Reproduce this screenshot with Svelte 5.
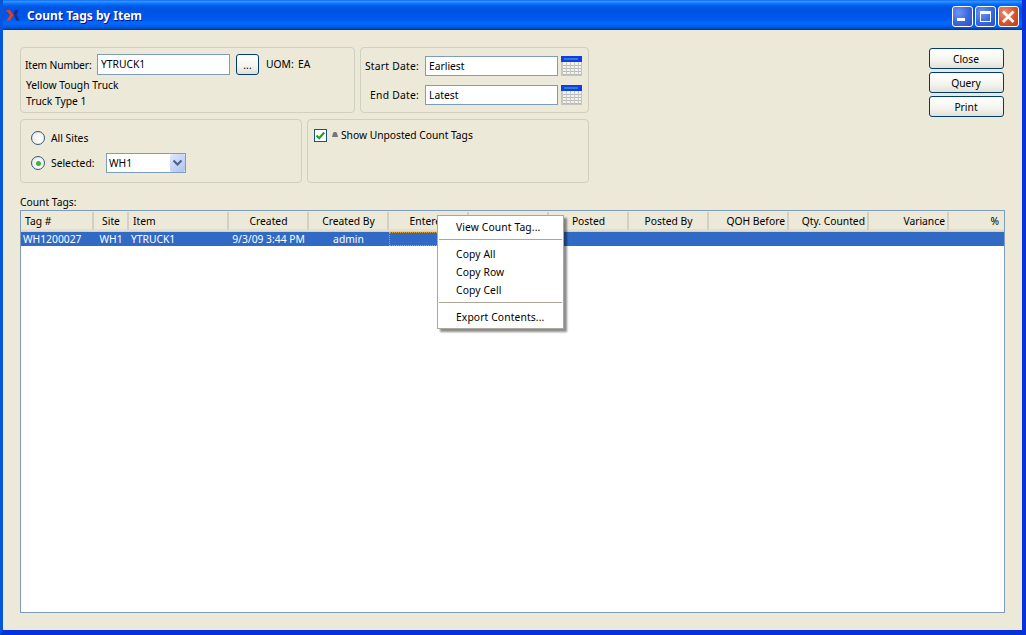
<script>
  const cols = [
    { label: 'Tag #', w: 73, a: 'left', v: 'WH1200027' },
    { label: 'Site', w: 35, a: 'center', v: 'WH1' },
    { label: 'Item', w: 100, a: 'left', v: 'YTRUCK1' },
    { label: 'Created', w: 80, a: 'center', v: '9/3/09 3:44 PM' },
    { label: 'Created By', w: 80, a: 'center', v: 'admin' },
    { label: 'Entered', w: 80, a: 'center', v: '', focus: true },
    { label: 'Entered By', w: 80, a: 'center', v: '' },
    { label: 'Posted', w: 80, a: 'center', v: '' },
    { label: 'Posted By', w: 80, a: 'center', v: '' },
    { label: 'QOH Before', w: 80, a: 'right', v: '' },
    { label: 'Qty. Counted', w: 80, a: 'right', v: '' },
    { label: 'Variance', w: 80, a: 'right', v: '' },
    { label: '%', w: 55, a: 'right', v: '' }
  ];
  const template = cols.map((c) => c.w + 'px').join(' ');
  const calCols = [1, 5, 9, 13, 17];
  const calRows = [9, 12, 15, 18];
</script>

{#snippet calendar()}
  <svg class="cal" width="21" height="20" viewBox="0 0 21 20">
    <rect x="0.5" y="0.5" width="20" height="19" fill="#f2f2f0" stroke="#c4c4c0" />
    <rect x="0" y="0" width="21" height="6" fill="#0f3de8" />
    <rect x="3" y="2" width="14" height="2" fill="#2f7fc4" />
    {#each calRows as y}
      <rect x="1" {y} width="19" height="1" fill="#b8b8b4" />
    {/each}
    {#each calCols as x}
      <rect {x} y="6" width="1" height="13" fill="#c8c8c4" />
    {/each}
  </svg>
{/snippet}

<div class="window">
  <header class="titlebar">
    <svg class="logo" width="14" height="11" viewBox="0 0 14 11">
      <path d="M0 0 H4 L7.500 5 L4 10.500 H0.500 L4 5 Z" fill="#e0431c" />
      <path d="M12.500 0 H9 L7.500 3 L10 10.500 H14 L10.500 5 Z" fill="#1c2f86" />
    </svg>
    <span class="title">Count Tags by Item</span>
    <div class="wbtns">
      <div class="wbtn blue">
        <svg width="21" height="21" viewBox="0 0 21 21"><rect x="5" y="12" width="8" height="3" fill="#fff" /></svg>
      </div>
      <div class="wbtn blue">
        <svg width="21" height="21" viewBox="0 0 21 21"><rect x="5.500" y="5.500" width="10" height="10" fill="none" stroke="#fff" /><rect x="5" y="5" width="11" height="3" fill="#fff" /></svg>
      </div>
      <div class="wbtn red">
        <svg width="21" height="21" viewBox="0 0 21 21"><path d="M5 5.500 L15.500 16 M15.500 5.500 L5 16" stroke="#fff" stroke-width="2.800" /></svg>
      </div>
    </div>
  </header>

  <main class="content">
    <div class="top">
      <div class="params">
        <div class="row one">
          <section class="group item">
            <div class="line">
              <span class="lbl-item">Item Number:</span>
              <div class="input item-input">YTRUCK1</div>
              <div class="btn dots">...</div>
              <span class="uom">UOM:</span>
              <span class="ea">EA</span>
            </div>
            <div class="desc first">Yellow Tough Truck</div>
            <div class="desc">Truck Type 1</div>
          </section>
          <section class="group dates">
            <div class="date-row">
              <span class="date-lbl">Start Date:</span>
              <div class="input date-input">Earliest</div>
              {@render calendar()}
            </div>
            <div class="date-row">
              <span class="date-lbl">End Date:</span>
              <div class="input date-input">Latest</div>
              {@render calendar()}
            </div>
          </section>
        </div>
        <div class="row two">
          <section class="group sites">
            <div class="site-row">
              <span class="radio"></span>
              <span class="radio-lbl">All Sites</span>
            </div>
            <div class="site-row second">
              <span class="radio"><span class="dot"></span></span>
              <span class="radio-lbl sel">Selected:</span>
              <div class="combo">
                <span class="combo-val">WH1</span>
                <span class="arrow">
                  <svg width="15" height="17" viewBox="0 0 15 17"><path d="M3.500 6.500 L7.500 10.500 L11.500 6.500" fill="none" stroke="#4d6185" stroke-width="2" /></svg>
                </span>
              </div>
            </div>
          </section>
          <section class="group posted">
            <span class="check">
              <svg width="13" height="13" viewBox="0 0 13 13"><path d="M2.500 6.500 L5.200 9.200 L10.200 3.500" fill="none" stroke="#21a121" stroke-width="2.200" /></svg>
            </span>
            <svg class="caret" width="6" height="5" viewBox="0 0 6 5"><path d="M0 5 L1 1 L2 0 L4 0 L5 1 L6 5 Z" fill="#777" /></svg>
            <span class="posted-lbl">Show Unposted Count Tags</span>
          </section>
        </div>
      </div>
      <div class="actions">
        <div class="btn action">Close</div>
        <div class="btn action">Query</div>
        <div class="btn action">Print</div>
      </div>
    </div>

    <div class="list-label">Count Tags:</div>
    <div class="table">
      <div class="thead" style="grid-template-columns: {template}">
        {#each cols as c}
          <div class="th {c.a}">{c.label}</div>
        {/each}
      </div>
      <div class="trow" style="grid-template-columns: {template}">
        {#each cols as c}
          <div class="td {c.a}" class:focus={c.focus}>{c.v}</div>
        {/each}
      </div>

      <div class="menu">
        <div class="mi">View Count Tag...</div>
        <div class="sep"></div>
        <div class="mi">Copy All</div>
        <div class="mi">Copy Row</div>
        <div class="mi">Copy Cell</div>
        <div class="sep"></div>
        <div class="mi">Export Contents...</div>
      </div>
    </div>
  </main>
</div>

<style>
  :global(body) {
    margin: 0;
    background: #ece9d8;
  }
  .window {
    width: 1026px;
    height: 635px;
    box-sizing: border-box;
    display: flex;
    flex-direction: column;
    overflow: hidden;
    font-family: "Noto Sans", "DejaVu Sans", sans-serif;
    font-size: 10.3px;
    line-height: 14px;
    color: #000;
    background: #ece9d8;
    border-left: 3px solid #0855dd;
    border-right: 4px solid #0831d9;
    border-bottom: 5px solid #0831d9;
  }
  .titlebar {
    flex: none;
    height: 30px;
    margin: 0 -4px 0 -3px;
    display: flex;
    align-items: center;
    background: linear-gradient(180deg, #0058ee 0, #3593ff 3%, #288eff 7%, #127dff 10%, #036ffc 14%, #0262ee 18%, #0057e5 22%, #0054e3 26%, #0055eb 56%, #005bf5 66%, #026afe 76%, #0062ef 86%, #0052d6 93%, #0040ab 97%, #003092 100%);
  }
  .logo {
    margin-left: 6px;
    margin-top: 1px;
    flex: none;
  }
  .title {
    margin-left: 7px;
    font-family: "Noto Sans", sans-serif;
    font-weight: 700;
    font-size: 12px;
    color: #fff;
    text-shadow: 1px 1px 0 #0f1089;
    margin-top: 2px;
  }
  .wbtns {
    margin-left: auto;
    margin-right: 7px;
    margin-top: 3px;
    display: flex;
    gap: 2px;
  }
  .wbtn {
    width: 21px;
    height: 21px;
    box-sizing: border-box;
    border: 1px solid #fff;
    border-radius: 3px;
    overflow: hidden;
  }
  .wbtn svg {
    display: block;
    margin: -1px;
  }
  .blue {
    background: radial-gradient(circle at 30% 30%, #6f94f0 0, #3a66de 55%, #2a4fc4 100%);
  }
  .red {
    background: radial-gradient(circle at 30% 30%, #e8906c 0, #d9512d 55%, #c03a15 100%);
  }
  .content {
    flex: 1;
    min-height: 0;
    display: flex;
    flex-direction: column;
    padding: 17px;
  }
  .top {
    display: flex;
    justify-content: space-between;
    flex: none;
  }
  .params {
    width: 569px;
    display: flex;
    flex-direction: column;
    gap: 6px;
  }
  .row {
    display: flex;
    gap: 5px;
  }
  .row.one {
    height: 66px;
  }
  .row.two {
    height: 64px;
  }
  .group {
    box-sizing: border-box;
    border: 1px solid #d0d0bf;
    border-radius: 4px;
  }
  .item {
    width: 335px;
    padding: 6px 0 0 4px;
  }
  .line {
    display: flex;
    align-items: center;
    height: 21px;
  }
  .lbl-item {
    width: 72px;
    flex: none;
    letter-spacing: -0.15px;
  }
  .input {
    box-sizing: border-box;
    background: #fff;
    border: 1px solid #7f9db9;
    display: flex;
    align-items: center;
    padding-left: 3px;
    flex: none;
  }
  .item-input {
    width: 133px;
    height: 21px;
    padding-bottom: 2px;
  }
  .btn {
    box-sizing: border-box;
    border: 1px solid #003c74;
    border-radius: 3px;
    background: linear-gradient(180deg, #fff 0, #f4f4ee 60%, #e3e1d5 100%);
    display: flex;
    align-items: center;
    justify-content: center;
    flex: none;
  }
  .dots {
    width: 23px;
    height: 21px;
    margin-left: 6px;
  }
  .uom {
    margin-left: 7px;
    width: 32px;
    margin-top: -2px;
  }
  .ea {
    margin-top: -2px;
  }
  .desc {
    height: 16px;
    line-height: 16px;
    margin-left: 1px;
  }
  .desc.first {
    margin-top: 2px;
  }
  .dates {
    width: 229px;
    padding: 8px 0 0 0;
    display: flex;
    flex-direction: column;
    gap: 9px;
  }
  .date-row {
    display: flex;
    align-items: center;
    height: 20px;
  }
  .date-lbl {
    width: 58px;
    text-align: right;
    flex: none;
    letter-spacing: 0.25px;
  }
  .date-input {
    width: 133px;
    height: 20px;
    margin-left: 6px;
  }
  .cal {
    margin-left: 3px;
    flex: none;
  }
  .sites {
    width: 282px;
    padding: 10px 0 0 10px;
  }
  .site-row {
    display: flex;
    align-items: center;
    height: 16px;
  }
  .site-row.second {
    height: 20px;
    margin-top: 7px;
  }
  .radio {
    width: 14px;
    height: 14px;
    box-sizing: border-box;
    border: 1px solid #2f5a7f;
    border-radius: 50%;
    background: radial-gradient(circle at 60% 60%, #fff 0, #f4f3ee 55%, #d6d6ca 100%);
    display: flex;
    align-items: center;
    justify-content: center;
    flex: none;
  }
  .dot {
    width: 5px;
    height: 5px;
    border-radius: 50%;
    background: #3cb43c;
  }
  .radio-lbl {
    margin-left: 6px;
  }
  .radio-lbl.sel {
    width: 55px;
    flex: none;
  }
  .combo {
    width: 80px;
    height: 20px;
    box-sizing: border-box;
    background: #fff;
    border: 1px solid #7f9db9;
    display: flex;
    align-items: center;
    justify-content: space-between;
    padding-left: 2px;
  }
  .arrow {
    width: 15px;
    height: 18px;
    background: linear-gradient(135deg, #dfe8fb 0, #c1d2f7 60%, #afc3f1 100%);
    border-radius: 2px;
    display: block;
  }
  .arrow svg {
    display: block;
  }
  .posted {
    width: 282px;
    padding: 9px 0 0 6px;
    display: flex;
    align-items: flex-start;
  }
  .posted-lbl {
    margin-left: 3px;
    margin-top: -1px;
    letter-spacing: -0.03px;
  }
  .check {
    width: 13px;
    height: 13px;
    box-sizing: border-box;
    border: 1px solid #1c5180;
    background: #fff;
    flex: none;
    overflow: hidden;
  }
  .check svg {
    display: block;
    margin: -1px;
  }
  .caret {
    margin: 3px 0 0 5px;
    flex: none;
  }
  .actions {
    display: flex;
    flex-direction: column;
    gap: 3px;
    padding: 1px 1px 0 0;
  }
  .action {
    width: 75px;
    height: 21px;
    padding-right: 1px;
  }
  .list-label {
    margin-top: 12px;
    height: 15px;
    flex: none;
  }
  .table {
    flex: 1;
    min-height: 0;
    position: relative;
    box-sizing: border-box;
    background: #fff;
    border: 1px solid #7f9db9;
  }
  .thead,
  .trow {
    display: grid;
  }
  .thead {
    height: 20px;
    background: #ece9d8;
    border-bottom: 1px solid #d6d2c2;
    box-shadow: inset 0 -2px 0 #e2dfcf;
  }
  .th {
    height: 18px;
    margin-top: 1px;
    line-height: 18px;
    padding: 0 3px 0 4px;
    border-right: 2px solid #d4d0c0;
    white-space: nowrap;
    overflow: hidden;
  }
  .th.right {
    padding-right: 2px;
  }
  .th:last-child {
    border-right: 0;
    padding-right: 5px;
  }
  .trow {
    height: 14px;
    background: #316ac5;
    color: #fff;
  }
  .td {
    padding: 0 3px 0 2px;
    line-height: 14px;
    white-space: nowrap;
    box-sizing: border-box;
  }
  .td.focus {
    border: 1px dotted #e0a030;
  }
  .left {
    text-align: left;
  }
  .center {
    text-align: center;
  }
  .right {
    text-align: right;
  }
  .menu {
    position: absolute;
    left: 416px;
    top: 4px;
    width: 127px;
    height: 114px;
    box-sizing: border-box;
    background: #fff;
    border: 1px solid #aca899;
    box-shadow: 3px 3px 2px rgba(0, 0, 0, 0.45);
    padding: 2px 1px;
    z-index: 1;
  }
  .mi {
    height: 18px;
    line-height: 18px;
    padding-left: 17px;
    white-space: nowrap;
    letter-spacing: 0.12px;
  }
  .sep {
    height: 1px;
    margin: 3px 0 5px;
    background: #aca899;
  }
</style>
